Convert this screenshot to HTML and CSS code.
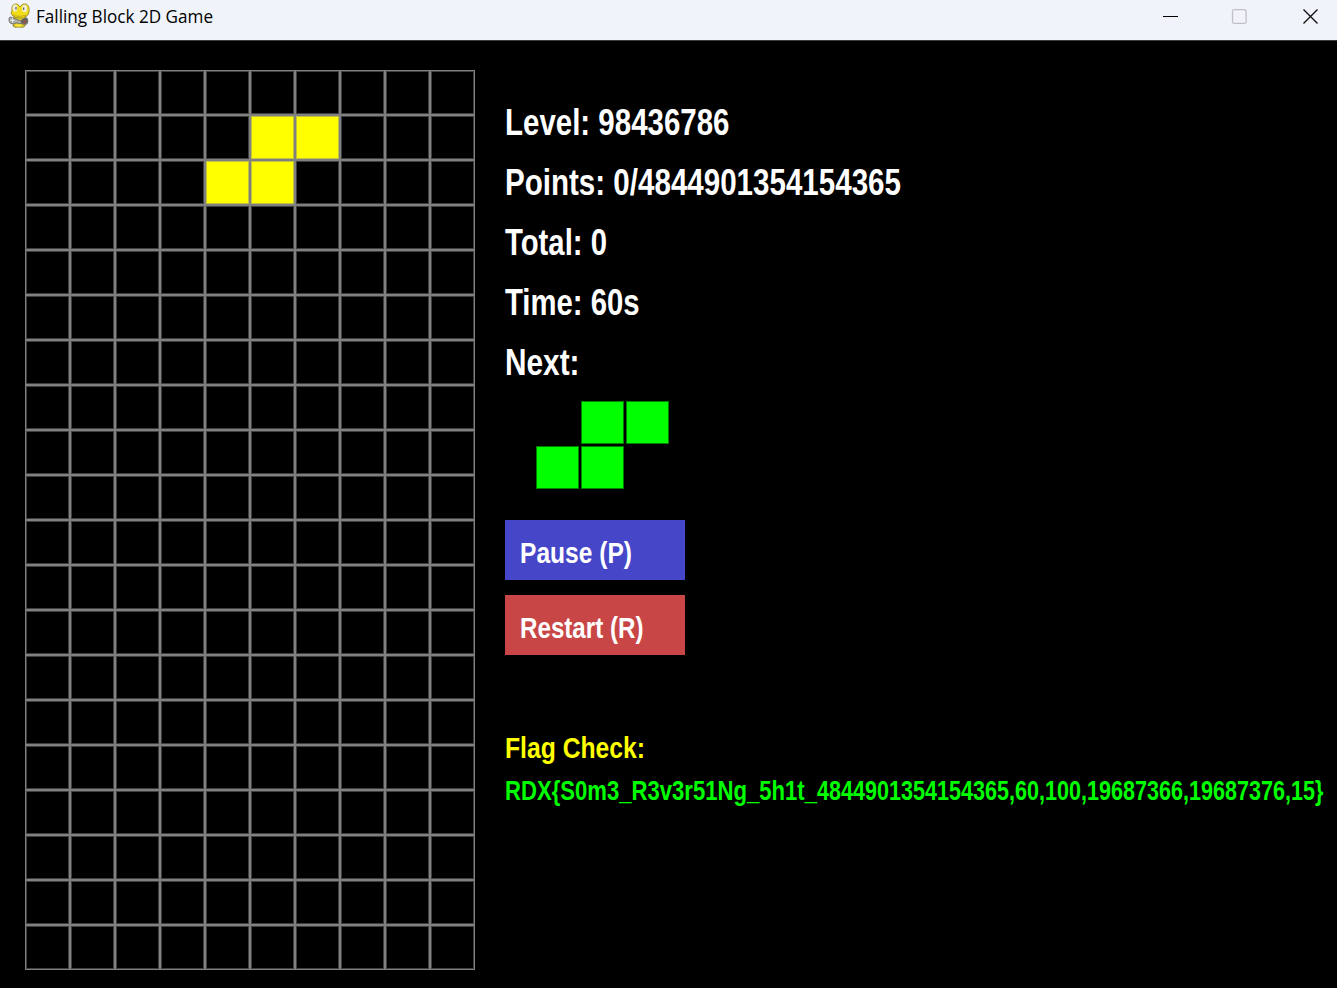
FILE: index.html
```html
<!DOCTYPE html>
<html lang="en">
<head>
<meta charset="utf-8">
<title>Falling Block 2D Game</title>
<link rel="stylesheet" href="styles.css">
</head>
<body>
<header class="titlebar">
  <svg class="app-icon" width="22" height="26" viewBox="0 0 22 26">
    <path d="M5 13L4 23Q5 25 10 24Q15 25 16 23L17 13Z" fill="#e0cc24" stroke="#77702c" stroke-width=".8"/>
    <path d="M3 8Q2 2 6 1Q9 0 11 4Q13 0 17 1Q21 3 20 9Q20 12 17 13Q15 16 11 15Q5 15 3 12Q1 10 3 8Z" fill="#f3dc18" stroke="#8b8028" stroke-width=".8"/>
    <ellipse cx="6" cy="5" rx="2.4" ry="3.6" fill="#eeeed8"/>
    <ellipse cx="15.5" cy="5.5" rx="2.5" ry="3.8" fill="#eeeed8"/>
    <path d="M7 4v2.5M14.6 4.5v2.5" stroke="#666" stroke-width="1.3"/>
    <path d="M4 11.5Q9 15 17 12" stroke="#c5aa18" fill="none"/>
    <path d="M0 15Q1 13 4 15L12 18Q14 16 18 15Q20 18 18 21Q15 22 12 20.5L7 20Q5 22 1 20Q-.5 18 0 15Z" fill="#aeb0ac" stroke="#66675f" stroke-width=".8"/>
    <path d="M12 17Q18 13 18.5 17Q19 21 15 21L12 20Z" fill="#66635e"/>
    <path d="M1.5 17.3h4M3.5 15.3v4" stroke="#ecece8"/>
    <path d="M14.5 18h2v2h-2z" fill="#b3423c"/>
    <path d="M6.5 22.5h6" stroke="#ffe93b" stroke-width="2"/>
  </svg>
  <svg class="title" width="180" height="32"><text x="0" y="23" textLength="177" lengthAdjust="spacingAndGlyphs">Falling Block 2D Game</text></svg>
  <svg class="controls" width="157" height="18" viewBox="0 0 157 18">
    <path d="M0 8.5h15" stroke="#000"/>
    <rect x="69.5" y="1.7" width="13.6" height="13.6" rx="1.5" fill="none" stroke="#bec0c5" stroke-width="1.3"/>
    <path d="M140.5 1.5l14 14M154.5 1.5l-14 14" stroke="#111" stroke-width="1.4"/>
  </svg>
</header>
<main class="game">
  <div class="board" id="board"></div>
  <section class="panel">
    <svg class="stat" width="230" height="60"><text y="34.5" textLength="224.5" lengthAdjust="spacingAndGlyphs">Level: 98436786</text></svg>
    <svg class="stat" width="400" height="60"><text y="34.5" textLength="396" lengthAdjust="spacingAndGlyphs">Points: 0/4844901354154365</text></svg>
    <svg class="stat" width="200" height="60"><text y="34.5" textLength="102" lengthAdjust="spacingAndGlyphs">Total: 0</text></svg>
    <svg class="stat" width="200" height="60"><text y="34.5" textLength="134.5" lengthAdjust="spacingAndGlyphs">Time: 60s</text></svg>
    <svg class="stat" width="200" height="60"><text y="34.5" textLength="74.5" lengthAdjust="spacingAndGlyphs">Next:</text></svg>
    <div class="next"><i></i><b></b><b></b><b></b><b></b><i></i></div>
    <button class="btn pause"><svg width="150" height="60"><text y="43" textLength="112" lengthAdjust="spacingAndGlyphs">Pause (P)</text></svg></button>
    <button class="btn restart"><svg width="150" height="60"><text y="43" textLength="123.5" lengthAdjust="spacingAndGlyphs">Restart (R)</text></svg></button>
    <svg class="flag-label" width="200" height="45"><text y="28" textLength="140" lengthAdjust="spacingAndGlyphs">Flag Check:</text></svg>
    <svg class="flag" width="830" height="45"><g transform="scale(.8 1)"><text y="25.5" textLength="390" lengthAdjust="spacingAndGlyphs">RDX{S0m3_R3v3r51Ng_5h1t_</text><text x="390" y="25.5" textLength="633.1" lengthAdjust="spacingAndGlyphs">4844901354154365,60,100,19687366,19687376,15}</text></g></svg>
  </section>
</main>
<script src="board.js"></script>
</body>
</html>
```
FILE: styles.css
```css
* { box-sizing: border-box; }
body { margin: 0; width: 1337px; height: 988px; overflow: hidden; background: #000; font-family: "Liberation Sans", Arial, sans-serif; }
svg { display: block; overflow: visible; }
.titlebar { display: flex; height: 41px; padding-left: 9px; background: #f0f3fa; border-bottom: 1px solid #3c3d3f; }
.app-icon { margin-top: 3px; }
.title { margin-left: 5px; font: 18px "Open Sans", "Noto Sans", sans-serif; fill: #000; }
.controls { margin: 8px 17px 0 auto; }
.game { display: flex; height: 947px; padding: 29px 0 0 25px; }
.board { display: grid; grid-template: repeat(20, 45px) / repeat(10, 45px); width: 450px; height: 900px; }
.cell { border: 1px solid #808080; box-shadow: inset 0 0 0 1px #404040; }
.cell.filled { background: #ff0; box-shadow: inset 0 0 0 1px #c0c040; }
.panel { width: 862px; padding: 30px 0 0 30px; font-weight: bold; }
.stat { font-size: 36px; fill: #fff; }
.next { display: grid; grid-template: repeat(2, 45px) / repeat(3, 45px); margin: 0 0 29px 31px; padding-top: 1px; }
.next b { width: 43px; height: 43px; background: #0f0; border: 1px solid #008000; }
.btn { display: block; width: 180px; height: 60px; margin: 0 0 15px; padding: 0 0 0 15px; border: 0; font: bold 30px "Liberation Sans", Arial, sans-serif; fill: #fff; }
.pause { background: #4646c8; }
.restart { background: #c84646; }
.flag-label { margin-top: 75px; font-size: 29px; fill: #ff0; }
.flag { font-size: 27px; fill: #0f0; }
```
FILE: board.js
```js
const filled = new Set([15, 16, 24, 25]);
const board = document.getElementById("board");
for (let i = 0; i < 200; i++) {
  const cell = document.createElement("div");
  cell.className = filled.has(i) ? "cell filled" : "cell";
  board.appendChild(cell);
}
```
